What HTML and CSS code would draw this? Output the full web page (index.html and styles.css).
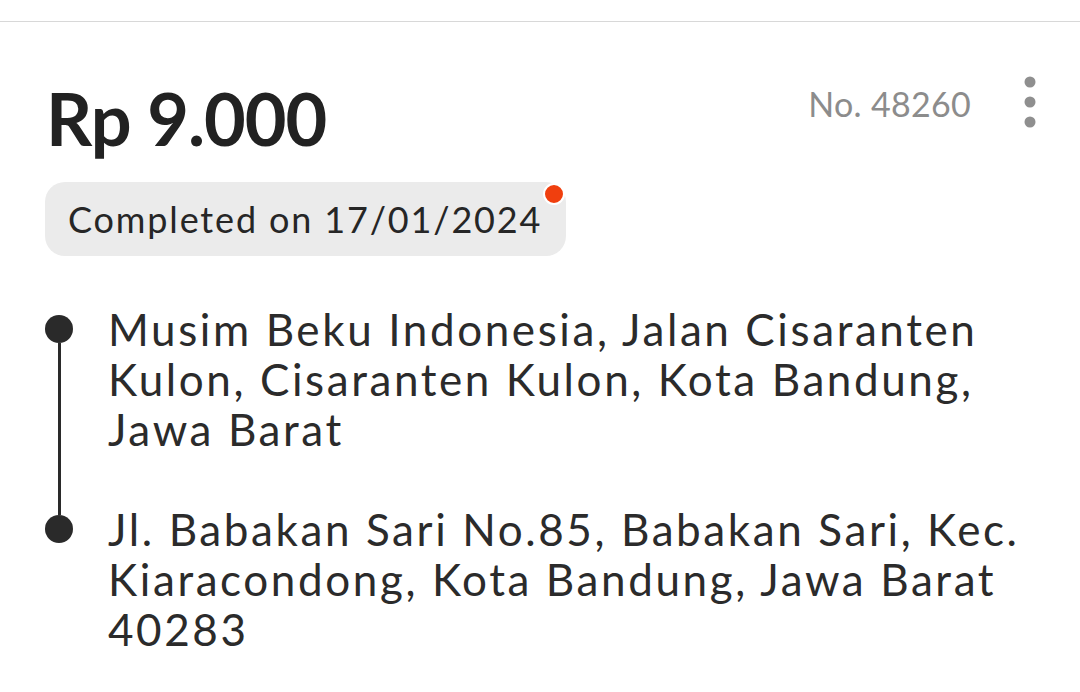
FILE: index.html
```html
<!DOCTYPE html>
<html>
<head>
<meta charset="utf-8">
<link rel="stylesheet" href="styles.css">
</head>
<body>
<div class="topbar"></div>
<main class="card">
  <div class="head">
    <div class="price">Rp 9.000</div>
    <div class="meta">
      <span class="order-no">No. 48260</span>
      <button class="kebab" aria-label="More">
        <svg width="12" height="52" viewBox="0 0 12 52"><circle cx="6" cy="6" r="5.5" fill="#8f8f8f"/><circle cx="6" cy="26" r="5.5" fill="#8f8f8f"/><circle cx="6" cy="46" r="5.5" fill="#8f8f8f"/></svg>
      </button>
    </div>
  </div>
  <div class="status">Completed on 17/01/2024<span class="badge"></span></div>
  <ol class="route">
    <li class="stop first">
      <div class="marker"><span class="seg-top"></span><span class="dot"></span><span class="seg-bottom"></span></div>
      <div class="addr">Musim Beku Indonesia, Jalan Cisaranten<br>Kulon, Cisaranten Kulon, Kota Bandung,<br>Jawa Barat</div>
    </li>
    <li class="stop last">
      <div class="marker"><span class="seg-top"></span><span class="dot"></span><span class="seg-bottom"></span></div>
      <div class="addr">Jl. Babakan Sari No.85, Babakan Sari, Kec.<br>Kiaracondong, Kota Bandung, Jawa Barat<br>40283</div>
    </li>
  </ol>
</main>
</body>
</html>
```
FILE: styles.css
```css
* { box-sizing: border-box; }
html, body { margin: 0; padding: 0; background: #fff; }
body {
  width: 1080px;
  height: 692px;
  overflow: hidden;
  font-family: "Lato", "Noto Sans", sans-serif;
  color: #2a2a2a;
}
.topbar {
  height: 22px;
  border-bottom: 1px solid #d8d8d8;
}
.card {
  padding: 0 44px 0 45px;
}
.head {
  display: flex;
  justify-content: space-between;
  align-items: flex-start;
  padding-top: 52px;
}
.price {
  font-size: 72px;
  font-weight: 700;
  line-height: 88px;
  color: #222;
  margin-left: 1px;
  letter-spacing: -1px;
}
.meta {
  display: flex;
  align-items: flex-start;
  gap: 53px;
}
.order-no {
  font-size: 34px;
  line-height: 56px;
  color: #8c8c8c;
  margin-top: 2px;
  letter-spacing: 0.3px;
}
.kebab {
  border: 0;
  background: none;
  padding: 0;
  margin-top: 2px;
  display: block;
  line-height: 0;
}
.status {
  position: relative;
  display: inline-block;
  margin-top: 20px;
  height: 74px;
  padding: 0 24px 0 23px;
  border-radius: 20px;
  background: #ebebeb;
  font-size: 36px;
  line-height: 74px;
  letter-spacing: 1.85px;
  color: #262626;
}
.badge {
  position: absolute;
  right: 1px;
  top: 1px;
  width: 22px;
  height: 22px;
  border-radius: 50%;
  background: #f03f0e;
  border: 2.5px solid #fff;
}
.route {
  list-style: none;
  margin: 0;
  padding: 48px 0 0 0;
}
.stop {
  display: flex;
  gap: 35px;
}
.marker {
  width: 28px;
  display: flex;
  flex-direction: column;
  align-items: center;
}
.seg-top { width: 3px; height: 11px; background: #2a2a2a; }
.seg-bottom { width: 3px; flex: 1; background: #2a2a2a; }
.first .seg-top, .last .seg-bottom { visibility: hidden; }
.dot {
  width: 28px;
  height: 28px;
  border-radius: 50%;
  background: #2a2a2a;
  flex: none;
}
.addr {
  font-size: 44px;
  line-height: 50px;
  letter-spacing: 2.6px;
  color: #2b2b2b;
}
.first .addr { padding-bottom: 50px; }
```
